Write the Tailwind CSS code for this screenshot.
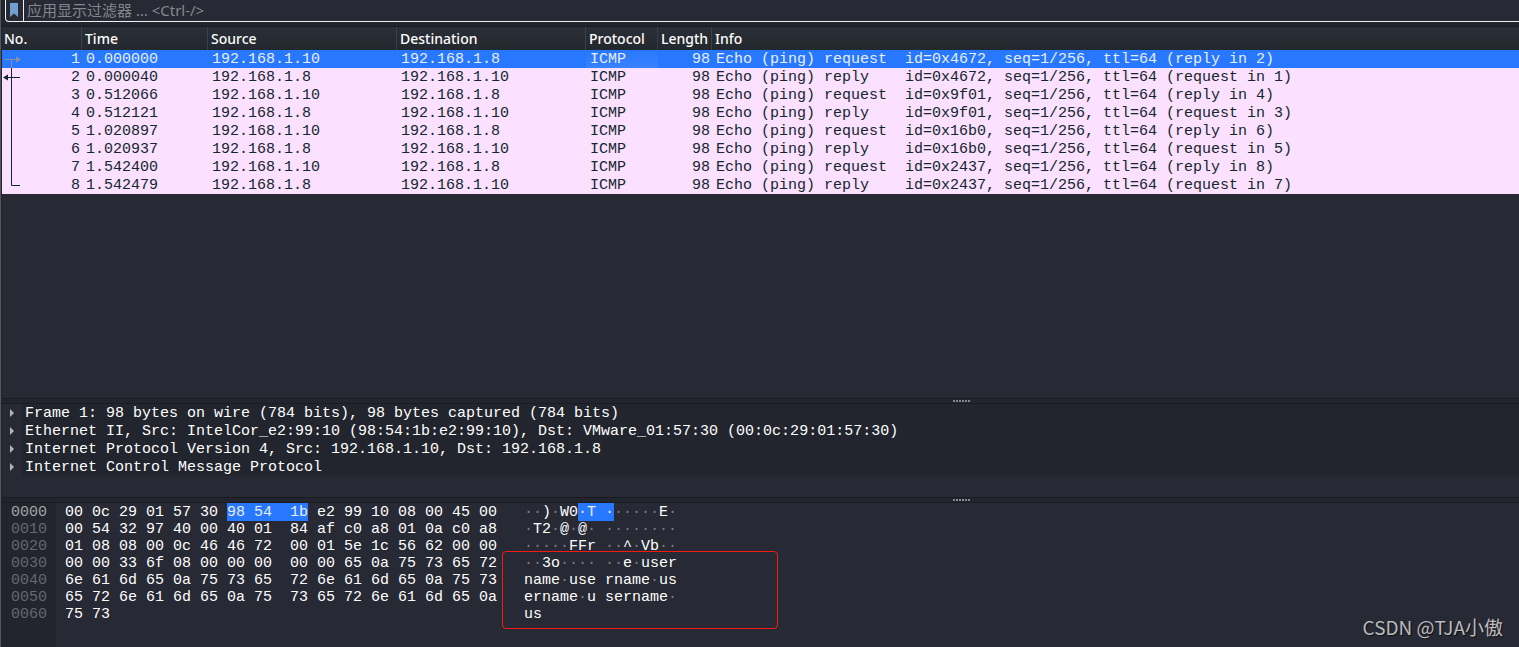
<!DOCTYPE html>
<html lang="zh-CN">
<head>
<meta charset="utf-8">
<title>Packet capture</title>
<script src="https://cdn.jsdelivr.net/npm/@tailwindcss/browser@4"></script>
</head>
<body class="bg-[#272934] text-white">
<div class="relative flex min-h-screen flex-col overflow-hidden border-l border-[#55565a] bg-[#22252d] pl-px font-['Liberation_Mono','Noto_Sans_CJK_SC',monospace] text-[15px] leading-[18px]">

  <!-- Display filter -->
  <form class="ml-[3px] flex h-[22px] shrink-0 items-stretch rounded-bl border-b border-l border-[#f0f0f0] bg-[#272934]">
    <button type="button" aria-label="Bookmarks" class="flex w-[18px] items-start justify-center border-r border-[#f0f0f0] pt-[3px] pr-px">
      <svg class="h-[14px] w-[8px]" viewBox="0 0 8 14"><path d="M0 0H8V14L4 10.500L0 14Z" fill="#729fcf"/></svg>
    </button>
    <input type="text" aria-label="显示过滤器" placeholder="应用显示过滤器 … &lt;Ctrl-/&gt;" class="min-w-0 flex-1 bg-transparent px-[3px] pb-[2px] font-['Noto_Sans','Noto_Sans_CJK_SC',sans-serif] text-[15px] outline-none placeholder:text-[#85868c]">
  </form>

  <!-- Packet list -->
  <section class="relative mt-1 flex-1 border-y border-[#1a1c22] bg-[#272934]" aria-label="Packets">
    <table class="w-full table-fixed border-separate border-spacing-0 whitespace-pre text-left text-[#12272e]">
      <colgroup><col class="w-[80px]"><col class="w-[126px]"><col class="w-[189px]"><col class="w-[189px]"><col class="w-[72px]"><col class="w-[54px]"><col></colgroup>
      <thead class="bg-linear-to-b from-[#2a2e36] to-[#23272e] font-['Noto_Sans',sans-serif] text-[14px] text-[#fcfcfc]">
        <tr class="[&>th]:h-[23px] [&>th]:border-r [&>th]:border-[#3c4047] [&>th]:p-0 [&>th]:pl-[3px] [&>th]:font-medium [&>th:first-child]:pl-[2px] [&>th:last-child]:border-r-0">
          <th>No.</th><th>Time</th><th>Source</th><th>Destination</th><th>Protocol</th><th>Length</th><th>Info</th>
        </tr>
      </thead>
      <tbody class="bg-[#fce0ff] leading-[16px] [&_td]:h-[18px] [&_td]:p-0 [&_td]:pt-[2px] [&_td]:pl-1 [&_td:first-child]:pr-[2px] [&_td:first-child]:text-right [&_td:nth-child(6)]:pr-[2px] [&_td:nth-child(6)]:text-right">
        <tr class="bg-[#2777ff] text-[#e8eeff]"><td>1</td><td>0.000000</td><td>192.168.1.10</td><td>192.168.1.8</td><td class="bg-linear-to-b from-[#2777ff] to-[#3882ff]">ICMP</td><td>98</td><td>Echo (ping) request  id=0x4672, seq=1/256, ttl=64 (reply in 2)</td></tr>
        <tr><td>2</td><td>0.000040</td><td>192.168.1.8</td><td>192.168.1.10</td><td>ICMP</td><td>98</td><td>Echo (ping) reply    id=0x4672, seq=1/256, ttl=64 (request in 1)</td></tr>
        <tr><td>3</td><td>0.512066</td><td>192.168.1.10</td><td>192.168.1.8</td><td>ICMP</td><td>98</td><td>Echo (ping) request  id=0x9f01, seq=1/256, ttl=64 (reply in 4)</td></tr>
        <tr><td>4</td><td>0.512121</td><td>192.168.1.8</td><td>192.168.1.10</td><td>ICMP</td><td>98</td><td>Echo (ping) reply    id=0x9f01, seq=1/256, ttl=64 (request in 3)</td></tr>
        <tr><td>5</td><td>1.020897</td><td>192.168.1.10</td><td>192.168.1.8</td><td>ICMP</td><td>98</td><td>Echo (ping) request  id=0x16b0, seq=1/256, ttl=64 (reply in 6)</td></tr>
        <tr><td>6</td><td>1.020937</td><td>192.168.1.8</td><td>192.168.1.10</td><td>ICMP</td><td>98</td><td>Echo (ping) reply    id=0x16b0, seq=1/256, ttl=64 (request in 5)</td></tr>
        <tr><td>7</td><td>1.542400</td><td>192.168.1.10</td><td>192.168.1.8</td><td>ICMP</td><td>98</td><td>Echo (ping) request  id=0x2437, seq=1/256, ttl=64 (reply in 8)</td></tr>
        <tr><td>8</td><td>1.542479</td><td>192.168.1.8</td><td>192.168.1.10</td><td>ICMP</td><td>98</td><td>Echo (ping) reply    id=0x2437, seq=1/256, ttl=64 (request in 7)</td></tr>
      </tbody>
    </table>
    <!-- Related packets of the conversation -->
    <svg class="absolute left-0 top-[23px] h-[144px] w-5" viewBox="0 0 20 144" fill="none">
      <path d="M2 9.500H15M9.500 9V18" stroke="#8c8f9a"/><path d="M14 6.500L19 9.500L14 12.500Z" fill="#8c8f9a"/>
      <path d="M9.500 18V135.500H18M5 27.500H18" stroke="#12272e"/><path d="M6 24.500L1 27.500L6 30.500Z" fill="#12272e"/>
    </svg>
  </section>

  <div class="flex h-[4px] items-center justify-center gap-px pl-[402px]" role="separator">
    <i class="size-[2px] bg-[#85868c]"></i><i class="size-[2px] bg-[#85868c]"></i><i class="size-[2px] bg-[#85868c]"></i><i class="size-[2px] bg-[#85868c]"></i><i class="size-[2px] bg-[#85868c]"></i><i class="size-[2px] bg-[#85868c]"></i>
  </div>

  <!-- Packet details -->
  <section class="border-y border-[#1a1c22] bg-[#272934] pb-[21px]" aria-label="Packet details">
    <ul class="[&_button]:flex [&_button]:w-full [&_button]:items-center [&_span]:flex-1 [&_span]:bg-[#22252d] [&_span]:pt-[2px] [&_span]:pl-[3px] [&_span]:text-left [&_span]:leading-[16px] [&_span]:whitespace-pre [&_svg]:mr-2 [&_svg]:ml-2 [&_svg]:h-[8px] [&_svg]:w-[4px] [&_svg]:shrink-0 [&_svg]:fill-[#b4b5b9]">
      <li><button type="button" aria-expanded="false"><svg viewBox="0 0 4 8"><path d="M0 0L4 4L0 8Z"/></svg><span>Frame 1: 98 bytes on wire (784 bits), 98 bytes captured (784 bits)</span></button></li>
      <li><button type="button" aria-expanded="false"><svg viewBox="0 0 4 8"><path d="M0 0L4 4L0 8Z"/></svg><span>Ethernet II, Src: IntelCor_e2:99:10 (98:54:1b:e2:99:10), Dst: VMware_01:57:30 (00:0c:29:01:57:30)</span></button></li>
      <li><button type="button" aria-expanded="false"><svg viewBox="0 0 4 8"><path d="M0 0L4 4L0 8Z"/></svg><span>Internet Protocol Version 4, Src: 192.168.1.10, Dst: 192.168.1.8</span></button></li>
      <li><button type="button" aria-expanded="false"><svg viewBox="0 0 4 8"><path d="M0 0L4 4L0 8Z"/></svg><span>Internet Control Message Protocol</span></button></li>
    </ul>
  </section>

  <div class="flex h-[4px] items-center justify-center gap-px pl-[402px]" role="separator">
    <i class="size-[2px] bg-[#85868c]"></i><i class="size-[2px] bg-[#85868c]"></i><i class="size-[2px] bg-[#85868c]"></i><i class="size-[2px] bg-[#85868c]"></i><i class="size-[2px] bg-[#85868c]"></i><i class="size-[2px] bg-[#85868c]"></i>
  </div>

  <!-- Packet bytes -->
  <section class="relative flex border-t border-[#1a1c22] bg-[#272934] leading-[17px] [&>pre]:pt-px [&>pre]:pb-[24px]" aria-label="Packet bytes">
    <pre class="w-[54px] bg-[#22252d] pl-[9px] font-[inherit] text-[#65676d]"><span class="text-[#a3a4a8]">0000</span>
0010
0020
0030
0040
0050
0060</pre>
    <pre class="w-[459px] pl-[9px] font-[inherit]">00 0c 29 01 57 30 <mark class="bg-[#2777ff] pt-px text-[#e8eeff]">98 54  1b</mark> e2 99 10 08 00 45 00
00 54 32 97 40 00 40 01  84 af c0 a8 01 0a c0 a8
01 08 08 00 0c 46 46 72  00 01 5e 1c 56 62 00 00
00 00 33 6f 08 00 00 00  00 00 65 0a 75 73 65 72
6e 61 6d 65 0a 75 73 65  72 6e 61 6d 65 0a 75 73
65 72 6e 61 6d 65 0a 75  73 65 72 6e 61 6d 65 0a
75 73</pre>
    <pre class="pl-[9px] font-[inherit] [&>s]:text-[#7b7c82] [&>s]:no-underline"><s>··</s>)<s>·</s>W0<mark class="bg-[#2777ff] pt-px text-[#e8eeff]">·T ·</mark><s>·····</s>E<s>·</s>
<s>·</s>T2<s>·</s>@<s>·</s>@<s>· ········</s>
<s>·····</s>FFr <s>··</s>^<s>·</s>Vb<s>··</s>
<s>··</s>3o<s>···· ··</s>e<s>·</s>user
name<s>·</s>use rname<s>·</s>us
ername<s>·</s>u sername<s>·</s>
us</pre>
    <div class="absolute left-[500px] top-[48px] h-[78px] w-[276px] rounded border border-[#f5190f]"></div>
    <p class="absolute right-4 bottom-[6px] font-['Noto_Sans_CJK_SC',sans-serif] text-[19px] leading-[28px] text-[#b9babd] [text-shadow:1px_1px_1px_#00000099]">CSDN @TJA小傲</p>
  </section>
</div>
</body>
</html>
